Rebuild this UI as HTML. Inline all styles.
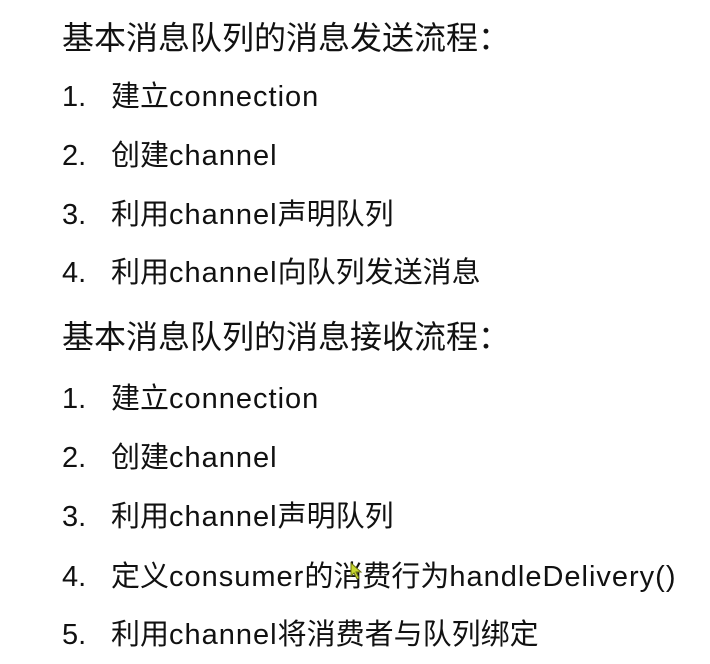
<!DOCTYPE html>
<html><head><meta charset="utf-8"><style>
body{margin:0;width:710px;height:664px;background:#fff;overflow:hidden;position:relative;font-family:"Liberation Sans","Noto Sans CJK SC",sans-serif;font-size:29px;color:#111;}
.l{position:absolute;left:62px;line-height:40px;height:40px;white-space:nowrap;}
.h{font-size:32px;}
.n{display:inline-block;width:49px;}
.e{letter-spacing:1px;}
</style></head><body>
<div class="l h" style="top:18px">基本消息队列的消息发送流程：</div>
<div class="l" style="top:77px"><span class="n">1.</span>建立<span class="e">connection</span></div>
<div class="l" style="top:136px"><span class="n">2.</span>创建<span class="e">channel</span></div>
<div class="l" style="top:195px"><span class="n">3.</span>利用<span class="e">channel</span>声明队列</div>
<div class="l" style="top:253px"><span class="n">4.</span>利用<span class="e">channel</span>向队列发送消息</div>
<div class="l h" style="top:317px">基本消息队列的消息接收流程：</div>
<div class="l" style="top:379px"><span class="n">1.</span>建立<span class="e">connection</span></div>
<div class="l" style="top:438px"><span class="n">2.</span>创建<span class="e">channel</span></div>
<div class="l" style="top:497px"><span class="n">3.</span>利用<span class="e">channel</span>声明队列</div>
<div class="l" style="top:557px"><span class="n">4.</span>定义<span class="e">consumer</span>的消费行为<span class="e">handleDelivery()</span></div>
<div class="l" style="top:615px"><span class="n">5.</span>利用<span class="e">channel</span>将消费者与队列绑定</div>
<svg style="position:absolute;left:350px;top:562px" width="14" height="18" viewBox="0 0 14 18"><path d="M1 1 L1 14 L4 11 L7 17 L9 16 L6 10 L11 10 Z" fill="#c8d830" stroke="#6a7010" stroke-width="1"/></svg>
</body></html>
